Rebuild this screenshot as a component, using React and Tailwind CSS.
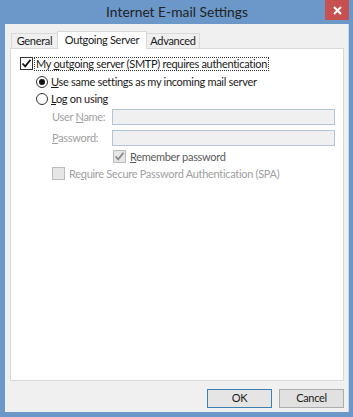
import React from "react";

const font = { fontFamily: 'Lato, "Noto Sans", sans-serif' };

function Check({ checked, disabled }) {
  return (
    <div
      className={
        "w-[13px] h-[13px] border flex items-center justify-center shrink-0 " +
        (disabled ? "border-[#bcbcbc] bg-[#e6e6e6]" : "border-[#333333] bg-white")
      }
    >
      {checked && (
        <svg width="11" height="11" viewBox="0 0 11 11">
          <path
            d="M1.5 5.5 L4.2 8.3 L9.5 1.8"
            fill="none"
            stroke={disabled ? "#8a8a8a" : "#111"}
            strokeWidth="1.8"
          />
        </svg>
      )}
    </div>
  );
}

function Radio({ checked }) {
  return (
    <div className="w-[12px] h-[12px] rounded-full border border-[#333333] bg-white flex items-center justify-center shrink-0">
      {checked && <div className="w-[6px] h-[6px] rounded-full bg-[#111]" />}
    </div>
  );
}

export default function App() {
  return (
    <div
      className="w-[353px] h-[417px] bg-[#6b98c9] flex flex-col pl-[5px] pr-[4px] pb-[5px] text-[11px] tracking-[-0.3px] text-[#1a1a1a] whitespace-nowrap"
      style={font}
    >
      <div className="h-[24px] flex items-start">
        <div className="w-[24px]" />
        <div className="flex-1 text-center text-[13.8px] tracking-normal leading-[24px] text-[#222]">
          Internet E-mail Settings
        </div>
        <div className="w-[24px] h-[20px] bg-[#c75050] flex items-center justify-center">
          <svg width="9" height="9" viewBox="0 0 9 9">
            <path d="M1 1 L8 8 M8 1 L1 8" stroke="white" strokeWidth="2" />
          </svg>
        </div>
      </div>
      <div className="flex-1 bg-[#f0f0f0] flex flex-col border-r border-[#d5d5d5]">
        <div className="flex items-end h-[24px] pl-[6px]">
          <div className="h-[15px] w-[47px] border border-b-0 border-[#d9d9d9] bg-[#f0f0f0] flex items-center justify-center -mr-px">
            General
          </div>
          <div className="h-[18px] w-[90px] border border-b-0 border-[#d9d9d9] bg-white flex items-center justify-center relative z-10 mb-[-1px] pb-px">
            Outgoing Server
          </div>
          <div className="h-[15px] w-[54px] border border-b-0 border-[#d9d9d9] bg-[#f0f0f0] flex items-center justify-center -ml-px">
            Advanced
          </div>
        </div>
        <div className="ml-[5px] mr-[4px] h-[333px] bg-white border border-[#d9d9d9] flex flex-col pt-[8px]">
          <div className="flex items-center h-[13px] pl-[9px] gap-[1px]">
            <Check checked />
            <div className="border border-dotted border-[#333] px-[1px] leading-[12px]">
              My <span className="underline">o</span>utgoing server (SMTP) requires authentication
            </div>
          </div>
          <div className="flex items-center h-[13px] mt-[5px] pl-[25px] gap-[3px]">
            <Radio checked />
            <div className="leading-[12px]">
              <span className="underline">U</span>se same settings as my incoming mail server
            </div>
          </div>
          <div className="flex items-center h-[13px] mt-[4px] pl-[25px] gap-[3px]">
            <Radio />
            <div className="leading-[12px]">
              <span className="underline">L</span>og on using
            </div>
          </div>
          <div className="flex items-center mt-[4px] pl-[41px]">
            <div className="w-[60px] text-[#a0a0a0]">
              User <span className="underline">N</span>ame:
            </div>
            <div className="w-[223px] h-[16px] border border-[#b4c4da] bg-[#f0f0f0]" />
          </div>
          <div className="flex items-center mt-[4px] pl-[41px]">
            <div className="w-[60px] text-[#a0a0a0]">
              <span className="underline">P</span>assword:
            </div>
            <div className="w-[223px] h-[16px] border border-[#b4c4da] bg-[#f0f0f0]" />
          </div>
          <div className="flex items-center h-[13px] mt-[4px] pl-[102px] gap-[4px]">
            <Check checked disabled />
            <div className="leading-[12px] text-[#5a5a5a]">
              <span className="underline">R</span>emember password
            </div>
          </div>
          <div className="flex items-center h-[13px] mt-[4px] pl-[41px] gap-[4px]">
            <Check disabled />
            <div className="leading-[12px] text-[#a0a0a0]">
              Re<span className="underline">q</span>uire Secure Password Authentication (SPA)
            </div>
          </div>
        </div>
        <div className="flex justify-end gap-[7px] mt-[8px] pr-[4px]">
          <div className="w-[65px] h-[19px] border border-[#3c7fb1] bg-[#e5e5e5] flex items-center justify-center">
            OK
          </div>
          <div className="w-[65px] h-[19px] border border-[#adadad] bg-[#e1e1e1] flex items-center justify-center">
            Cancel
          </div>
        </div>
      </div>
    </div>
  );
}
